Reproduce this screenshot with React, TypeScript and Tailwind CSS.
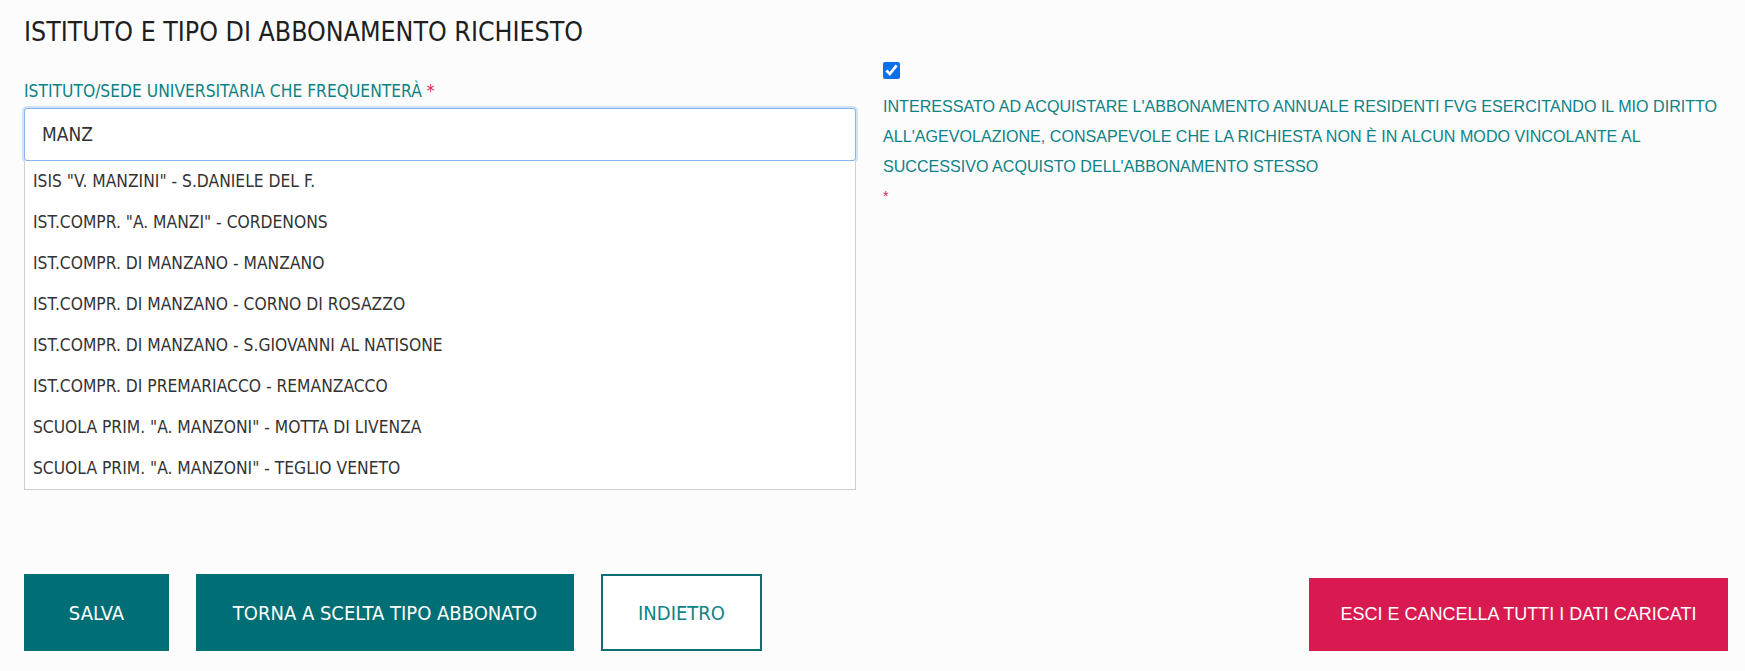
import { useState } from "react";

const schools = [
  'ISIS "V. MANZINI" - S.DANIELE DEL F.',
  'IST.COMPR. "A. MANZI" - CORDENONS',
  "IST.COMPR. DI MANZANO - MANZANO",
  "IST.COMPR. DI MANZANO - CORNO DI ROSAZZO",
  "IST.COMPR. DI MANZANO - S.GIOVANNI AL NATISONE",
  "IST.COMPR. DI PREMARIACCO - REMANZACCO",
  'SCUOLA PRIM. "A. MANZONI" - MOTTA DI LIVENZA',
  'SCUOLA PRIM. "A. MANZONI" - TEGLIO VENETO',
];

const narrow = "font-['Liberation_Sans_Narrow','DejaVu_Sans_Condensed','Liberation_Sans',sans-serif]";

export default function App() {
  const [query, setQuery] = useState("MANZ");
  const [interested, setInterested] = useState(true);

  return (
    <div className="min-h-[671px] bg-[#fcfcfc] pl-[24px] pr-[17px] pt-[14px] pb-[20px] flex flex-col">
      <h2 className={`${narrow} text-[26.5px] leading-[35px] text-[#1f1f1f]`}>
        ISTITUTO E TIPO DI ABBONAMENTO RICHIESTO
      </h2>

      <div className="grid grid-cols-[832px_1fr] gap-[27px] mt-[6px]">
        {/* Institute autocomplete */}
        <div className="pt-[24px]">
          <label className={`${narrow} block text-[17.3px] leading-[24px] text-[#0e8286]`}>
            ISTITUTO/SEDE UNIVERSITARIA CHE FREQUENTERÀ <span className="text-[#e0245e]">*</span>
          </label>
          <div className="mt-[5px] h-[53px] flex items-center bg-white border border-[#86b3ea] rounded-[3px] shadow-[0_0_0_2px_rgba(134,179,234,0.35)] pl-[17px]">
            <input
              value={query}
              onChange={(e) => setQuery(e.target.value)}
              className={`${narrow} w-full text-[19px] text-[#333] outline-none bg-transparent caret-[#222]`}
            />
          </div>
          <ul className="bg-white border border-[#cfcfcf] border-t-0">
            {schools.map((s) => (
              <li
                key={s}
                className={`${narrow} h-[41px] flex items-center px-[8px] text-[17.3px] text-[#333]`}
              >
                {s}
              </li>
            ))}
          </ul>
        </div>

        {/* Interest checkbox */}
        <div className="pt-[7px]">
          <input
            type="checkbox"
            checked={interested}
            onChange={(e) => setInterested(e.target.checked)}
            className="block w-[17px] h-[17px] accent-[#0b6fe8]"
          />
          <p className="mt-[12px] font-['Liberation_Sans',sans-serif] text-[16.1px] leading-[30px] text-[#0e8286]">
            INTERESSATO AD ACQUISTARE L'ABBONAMENTO ANNUALE RESIDENTI FVG ESERCITANDO IL MIO DIRITTO
            ALL'AGEVOLAZIONE, CONSAPEVOLE CHE LA RICHIESTA NON È IN ALCUN MODO VINCOLANTE AL SUCCESSIVO
            ACQUISTO DELL'ABBONAMENTO STESSO
          </p>
          <p className="font-['Liberation_Sans',sans-serif] text-[14px] leading-[30px] text-[#e0245e]">*</p>
        </div>
      </div>

      <div className="mt-auto flex items-end justify-between">
        <div className="flex gap-[27px]">
          <button className={`${narrow} w-[145px] h-[77px] bg-[#006f75] text-white text-[20px]`}>
            SALVA
          </button>
          <button className={`${narrow} w-[378px] h-[77px] bg-[#006f75] text-white text-[20px]`}>
            TORNA A SCELTA TIPO ABBONATO
          </button>
          <button className={`${narrow} w-[161px] h-[77px] bg-white border-2 border-[#0b6f75] text-[#0e8286] text-[20px]`}>
            INDIETRO
          </button>
        </div>
        <button className="font-['Liberation_Sans',sans-serif] w-[419px] h-[73px] bg-[#d81a50] text-white text-[18px]">
          ESCI E CANCELLA TUTTI I DATI CARICATI
        </button>
      </div>
    </div>
  );
}
